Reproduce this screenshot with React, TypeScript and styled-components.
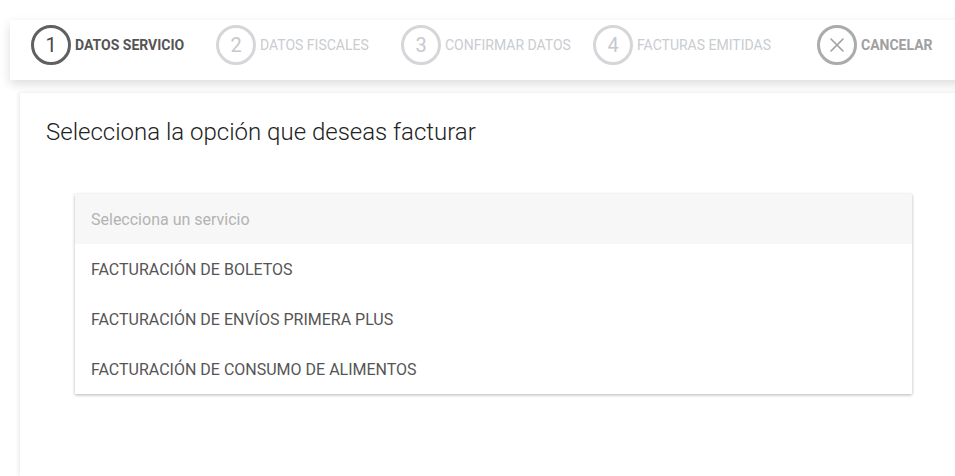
import React from "react";
import styled, { createGlobalStyle } from "styled-components";

const Global = createGlobalStyle`
  html, body { margin: 0; padding: 0; background: #fff; }
  body { font-family: Roboto, "Noto Sans", Arial, sans-serif; overflow: hidden; }
  * { box-sizing: border-box; }
`;

const Page = styled.div`
  width: 955px;
  height: 476px;
  overflow: hidden;
  padding-top: 20px;
  display: flex;
  flex-direction: column;
`;

const Stepper = styled.div`
  margin-left: 10px;
  width: 960px;
  height: 60px;
  background: #fff;
  display: flex;
  align-items: center;
  padding-left: 21px;
  padding-bottom: 10px;
  box-shadow: 0 4px 10px rgba(0, 0, 0, 0.14);
  position: relative;
  z-index: 2;
`;

const Step = styled.div<{ $width?: number }>`
  display: flex;
  align-items: center;
  flex: 0 0 ${(p) => (p.$width ? `${p.$width}px` : "auto")};
`;

type Tone = "active" | "idle" | "cancel";

const Circle = styled.div<{ $tone: Tone }>`
  width: 40px;
  height: 40px;
  border-radius: 50%;
  border: 3px solid
    ${(p) => (p.$tone === "active" ? "#606060" : p.$tone === "cancel" ? "#ababab" : "#d4d6d9")};
  color: ${(p) => (p.$tone === "active" ? "#4a4a4a" : p.$tone === "cancel" ? "#a0a0a0" : "#c6c9cd")};
  display: flex;
  align-items: center;
  justify-content: center;
  font-size: 20px;
  font-weight: 400;
  flex-shrink: 0;
`;

const StepLabel = styled.span<{ $tone: Tone }>`
  margin-left: 4px;
  font-size: 14px;
  white-space: nowrap;
  font-weight: ${(p) => (p.$tone === "idle" ? 400 : 700)};
  color: ${(p) => (p.$tone === "active" ? "#555" : p.$tone === "cancel" ? "#a0a0a0" : "#c9ccd0")};
`;

const Card = styled.div`
  margin-top: 13px;
  margin-left: 20px;
  width: 960px;
  flex: 1;
  background: #fff;
  box-shadow: -1px 0 4px rgba(0, 0, 0, 0.1);
  padding: 23px 0 0 26px;
`;

const Title = styled.h1`
  margin: 0;
  font-size: 24px;
  font-weight: 300;
  color: #222;
  line-height: 32px;
`;

const Select = styled.div`
  margin-top: 46px;
  margin-left: 29px;
  width: 837px;
  background: #fff;
  box-shadow: 0 1px 3px rgba(0, 0, 0, 0.3);
`;

const Option = styled.div<{ $placeholder?: boolean }>`
  height: 50px;
  display: flex;
  align-items: center;
  padding-left: 16px;
  font-size: 16px;
  background: ${(p) => (p.$placeholder ? "#f7f7f7" : "#fff")};
  color: ${(p) => (p.$placeholder ? "#b3b3b3" : "#555")};
`;

const CloseIcon = () => (
  <svg width="16" height="16" viewBox="0 0 16 16" fill="none">
    <path d="M2 2 L14 14 M14 2 L2 14" stroke="#a0a0a0" strokeWidth="1.6" strokeLinecap="round" />
  </svg>
);

const steps: { n: string; label: string; tone: Tone; width: number }[] = [
  { n: "1", label: "DATOS SERVICIO", tone: "active", width: 185 },
  { n: "2", label: "DATOS FISCALES", tone: "idle", width: 185 },
  { n: "3", label: "CONFIRMAR DATOS", tone: "idle", width: 192 },
  { n: "4", label: "FACTURAS EMITIDAS", tone: "idle", width: 224 },
];

const options = [
  "FACTURACIÓN DE BOLETOS",
  "FACTURACIÓN DE ENVÍOS PRIMERA PLUS",
  "FACTURACIÓN DE CONSUMO DE ALIMENTOS",
];

export default function App() {
  return (
    <>
      <Global />
      <Page>
        <Stepper>
          {steps.map((s) => (
            <Step key={s.n} $width={s.width}>
              <Circle $tone={s.tone}>{s.n}</Circle>
              <StepLabel $tone={s.tone}>{s.label}</StepLabel>
            </Step>
          ))}
          <Step>
            <Circle $tone="cancel">
              <CloseIcon />
            </Circle>
            <StepLabel $tone="cancel">CANCELAR</StepLabel>
          </Step>
        </Stepper>
        <Card>
          <Title>Selecciona la opción que deseas facturar</Title>
          <Select>
            <Option $placeholder>Selecciona un servicio</Option>
            {options.map((o) => (
              <Option key={o}>{o}</Option>
            ))}
          </Select>
        </Card>
      </Page>
    </>
  );
}
